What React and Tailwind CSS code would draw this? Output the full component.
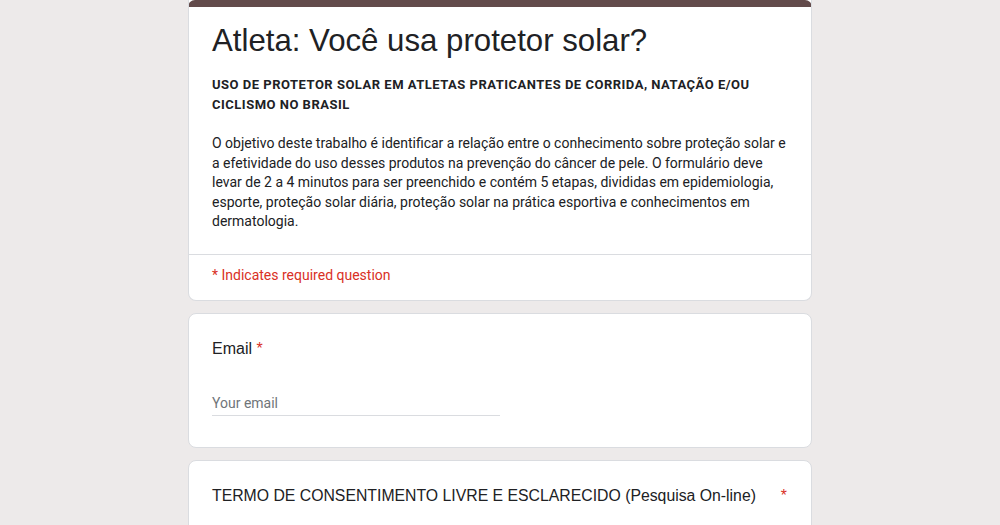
export default function App() {
  return (
    <div className="min-h-[525px] w-full bg-[#edeaea] flex justify-center">
      <div className="w-[624px] flex flex-col gap-[12px]">
        <div className="bg-white rounded-b-lg border border-t-0 border-[#dadce0] overflow-hidden">
          <div className="h-[7px] bg-[#634b4b] rounded-t-lg -mx-px"></div>
          <div className="px-[23px] pt-[14px] pb-[22px]">
            <h1 className="text-[31.2px] leading-[40px] text-[#202124] font-['Liberation_Sans',Arial,sans-serif]">
              Atleta: Você usa protetor solar?
            </h1>
            <p className="mt-[14px] text-[13px] leading-[20px] font-bold tracking-[0.5px] text-[#202124] font-['Roboto',sans-serif] uppercase">
              USO DE PROTETOR SOLAR EM ATLETAS PRATICANTES DE CORRIDA, NATAÇÃO E/OU CICLISMO NO BRASIL
            </p>
            <p className="mt-[19px] mr-[-4px] text-[14px] leading-[19.5px] text-[#202124] font-['Roboto',sans-serif]">
              O objetivo deste trabalho é identificar a relação entre o conhecimento sobre proteção solar e a efetividade do uso desses produtos na prevenção do câncer de pele. O formulário deve levar de 2 a 4 minutos para ser preenchido e contém 5 etapas, divididas em epidemiologia, esporte, proteção solar diária, proteção solar na prática esportiva e conhecimentos em dermatologia.
            </p>
          </div>
          <div className="border-t border-[#dadce0] px-[23px] pt-[10px] pb-[15px]">
            <p className="text-[14px] leading-[20px] text-[#d93025] font-['Roboto',sans-serif]">
              * Indicates required question
            </p>
          </div>
        </div>

        <div className="bg-white rounded-lg border border-[#dadce0] px-[23px] pt-[23px] pb-[31px]">
          <div className="text-[16px] leading-[24px] text-[#202124] font-['Liberation_Sans',Arial,sans-serif]">
            Email <span className="text-[#d93025]">*</span>
          </div>
          <div className="mt-[29px] w-[288px] border-b border-[#dadce0] pb-[1px]">
            <span className="text-[14px] leading-[20px] text-[#70757a] font-['Roboto',sans-serif]">Your email</span>
          </div>
        </div>

        <div className="bg-white rounded-lg border border-[#dadce0] px-[23px] pt-[23px] pb-[30px] h-[80px]">
          <div className="flex text-[15.8px] leading-[24px] text-[#202124] font-['Liberation_Sans',Arial,sans-serif]">
            <span>TERMO DE CONSENTIMENTO LIVRE E ESCLARECIDO (Pesquisa On-line)</span>
            <span className="ml-auto mr-[1px] text-[#d93025]">*</span>
          </div>
        </div>
      </div>
    </div>
  );
}
